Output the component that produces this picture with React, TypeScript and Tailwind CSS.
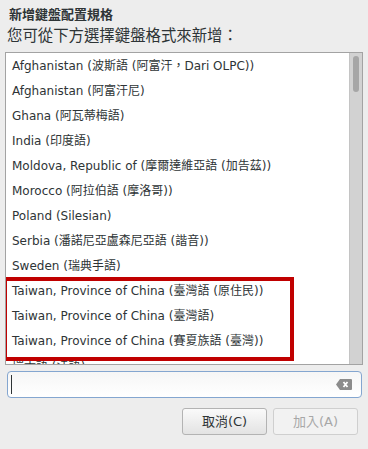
import React from "react";

const rows = [
  "Afghanistan (波斯語 (阿富汗，Dari OLPC))",
  "Afghanistan (阿富汗尼)",
  "Ghana (阿瓦蒂梅語)",
  "India (印度語)",
  "Moldova, Republic of (摩爾達維亞語 (加告茲))",
  "Morocco (阿拉伯語 (摩洛哥))",
  "Poland (Silesian)",
  "Serbia (潘諾尼亞盧森尼亞語 (諧音))",
  "Sweden (瑞典手語)",
  "Taiwan, Province of China (臺灣語 (原住民))",
  "Taiwan, Province of China (臺灣語)",
  "Taiwan, Province of China (賽夏族語 (臺灣))",
  "瑞士語 (法語)",
];

const font = { fontFamily: '"DejaVu Sans", "Noto Sans CJK TC", sans-serif' };

function ClearIcon() {
  return (
    <svg width="16" height="11" viewBox="0 0 16 11">
      <path d="M4 0 H15 a1 1 0 0 1 1 1 V10 a1 1 0 0 1 -1 1 H4 L0 5.5 Z" fill="#8c8c8c" />
      <path d="M7.5 3 L11.5 8 M11.5 3 L7.5 8" stroke="#fff" strokeWidth="1.8" />
    </svg>
  );
}

export default function App() {
  return (
    <div
      className="w-[368px] h-[449px] bg-[#ededed] text-[#2e3436] flex flex-col overflow-hidden"
      style={font}
    >
      <div className="pt-[6px] pl-[9px] h-[26px] text-[13px] font-bold leading-[17px]">新增鍵盤配置規格</div>
      <div className="pl-[7px] h-[26px] text-[15.4px] leading-[20px]">您可從下方選擇鍵盤格式來新增：</div>

      <div className="relative mx-[5px] h-[313px] border border-[#a3a3a3] bg-white flex overflow-hidden">
        <div className="flex-1 flex flex-col overflow-hidden">
          {rows.map((r) => (
            <div key={r} className="h-[25px] shrink-0 pl-[6px] flex items-center text-[12px] whitespace-nowrap">
              {r}
            </div>
          ))}
        </div>
        <div className="w-[13px] bg-[#d2d2d2] border-l border-[#c4c4c4] flex justify-center pt-[3px]">
          <div className="w-[6px] h-[36px] rounded-full bg-[#a6a6a6]" />
        </div>
        <div className="absolute left-[-3px] top-[224px] w-[291px] h-[84px] border-[4px] border-[#c00000]" />
      </div>

      <div className="mt-[6px] ml-[7px] mr-[6px] h-[27px] rounded-[4px] border border-[#84a6d0] bg-gradient-to-b from-[#f6f6f6] to-white flex items-center pl-[3px] pr-[9px]">
        <div className="w-px h-[19px] bg-[#2e3436]" />
        <div className="flex-1" />
        <ClearIcon />
      </div>

      <div className="mt-[10px] mr-[10px] flex justify-end gap-[6px]">
        <button className="w-[85px] h-[27px] rounded-[3px] border border-[#b3b3b3] bg-gradient-to-b from-[#fafafa] to-[#e3e3e3] text-[13px] text-[#2e3436]">
          取消(C)
        </button>
        <button className="w-[85px] h-[27px] rounded-[3px] border border-[#cfcfcf] bg-[#f2f2f2] text-[13px] text-[#a7a7a7]">
          加入(A)
        </button>
      </div>
    </div>
  );
}
